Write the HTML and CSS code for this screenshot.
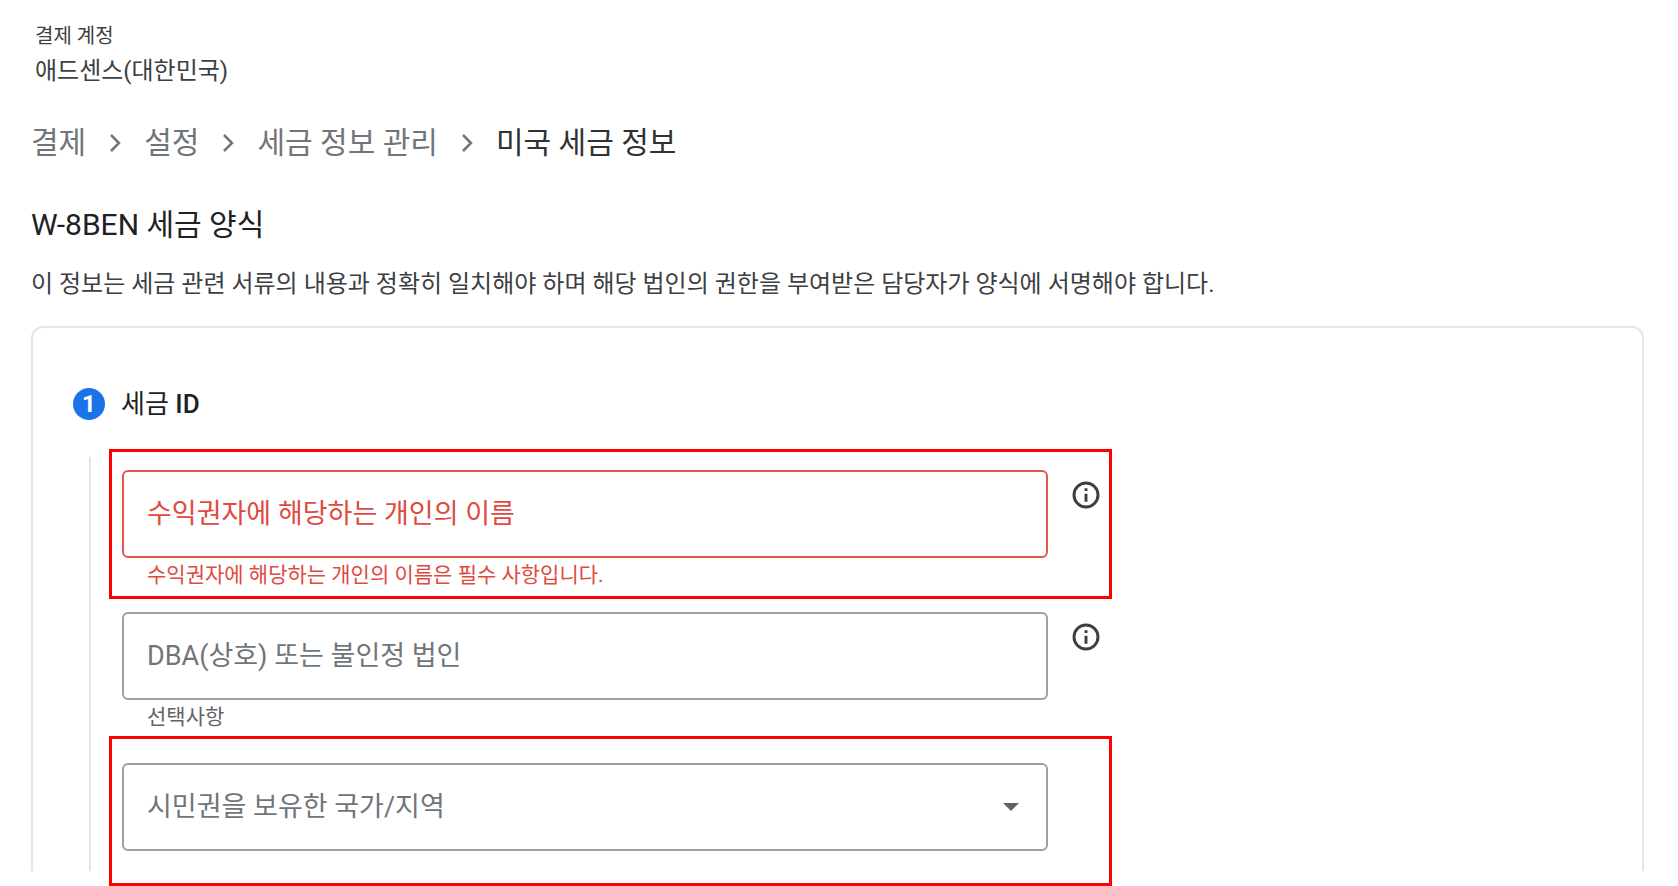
FILE: index.html
```
<!DOCTYPE html>
<html lang="ko">
<head>
<meta charset="UTF-8">
<meta name="viewport" content="width=device-width, initial-scale=1.0">
<title>미국 세금 정보</title>
<link rel="stylesheet" href="styles.css">
</head>
<body>
<header class="account">
  <div class="account-label">결제 계정</div>
  <div class="account-name">애드센스(대한민국)</div>
</header>
<nav class="breadcrumb">
  <a href="#">결제</a>
  <svg class="chevron" viewBox="0 0 24 24"><path d="M8 4l8 8-8 8"/></svg>
  <a href="#">설정</a>
  <svg class="chevron" viewBox="0 0 24 24"><path d="M8 4l8 8-8 8"/></svg>
  <a href="#">세금 정보 관리</a>
  <svg class="chevron" viewBox="0 0 24 24"><path d="M8 4l8 8-8 8"/></svg>
  <span class="current">미국 세금 정보</span>
</nav>
<main>
  <h1>W-8BEN 세금 양식</h1>
  <p class="description">이 정보는 세금 관련 서류의 내용과 정확히 일치해야 하며 해당 법인의 권한을 부여받은 담당자가 양식에 서명해야 합니다.</p>
  <section class="card">
    <div class="step-header">
      <span class="step-number">1</span>
      <h2>세금 <b>ID</b></h2>
    </div>
    <form class="step-body">
      <div class="step-line"></div>
      <div class="fields">
        <div class="row highlight">
          <div class="field error">
            <div class="box">
              <input id="name" type="text" required>
              <label for="name">수익권자에 해당하는 개인의 이름</label>
            </div>
            <div class="helper">수익권자에 해당하는 개인의 이름은 필수 사항입니다.</div>
          </div>
          <button class="info" type="button" aria-label="도움말">
            <svg viewBox="0 0 24 24"><circle cx="12" cy="12" r="9"/><path d="M12 7v2M12 11v6"/></svg>
          </button>
        </div>
        <div class="row">
          <div class="field">
            <div class="box">
              <input id="dba" type="text">
              <label for="dba">DBA(상호) 또는 불인정 법인</label>
            </div>
            <div class="helper">선택사항</div>
          </div>
          <button class="info" type="button" aria-label="도움말">
            <svg viewBox="0 0 24 24"><circle cx="12" cy="12" r="9"/><path d="M12 7v2M12 11v6"/></svg>
          </button>
        </div>
        <div class="row highlight last">
          <div class="field">
            <div class="box">
              <select id="country">
                <option value=""></option>
                <option value="KR">대한민국</option>
                <option value="US">미국</option>
              </select>
              <label for="country">시민권을 보유한 국가/지역</label>
              <svg class="arrow" viewBox="0 0 16 8"><path d="M0 0h16L8 8z"/></svg>
            </div>
          </div>
          <div class="info"></div>
        </div>
      </div>
    </form>
  </section>
</main>
</body>
</html>
```
FILE: styles.css
```
* {
  box-sizing: border-box;
}

body {
  margin: 0;
  padding: 20px 34px 15px 31px;
  background: #fff;
  color: #3c4043;
  font-family: Roboto, 'Noto Sans CJK KR', sans-serif;
}

.account {
  padding-left: 4px;
}

.account-label {
  font-size: 20px;
  line-height: 32px;
}

.account-name {
  font-size: 24px;
  line-height: 38px;
}

.breadcrumb {
  display: flex;
  align-items: center;
  gap: 17px;
  margin-top: 33px;
  font-size: 30px;
  line-height: 40px;
  color: #5f6368;
}

.breadcrumb a {
  color: #70757a;
  text-decoration: none;
}

.breadcrumb .current {
  color: #303134;
}

.chevron {
  width: 24px;
  height: 24px;
  fill: none;
  stroke: #70757a;
  stroke-width: 2.5;
}

h1 {
  margin: 42px 0 0;
  font-size: 30px;
  line-height: 40px;
  font-weight: 400;
  color: #202124;
}

.description {
  margin: 23px 0 26px;
  font-size: 24px;
  line-height: 32px;
}

.card {
  padding: 60px 40px 0;
  border: 2px solid #e4e5ea;
  border-bottom: none;
  border-radius: 12px 12px 0 0;
}

.step-header {
  display: flex;
  align-items: center;
  gap: 16px;
}

.step-number {
  width: 32px;
  height: 32px;
  border-radius: 50%;
  background: #1a73e8;
  color: #fff;
  font-size: 24px;
  font-weight: 700;
  line-height: 32px;
  text-align: center;
}

h2 {
  margin: 0;
  font-size: 26px;
  line-height: 32px;
  font-weight: 400;
  color: #202124;
}

h2 b {
  font-weight: 500;
}

.step-body {
  display: flex;
  margin-top: 29px;
}

.step-line {
  width: 2px;
  margin: 8px 18px 0 16px;
  background: #e4e5ea;
}

.fields {
  flex: 1;
  max-width: 1003px;
}

.row {
  display: flex;
  gap: 22px;
  padding: 13px 10px 2px 13px;
}

.highlight {
  padding: 18px 7px 4px 10px;
  border: 3px solid #f00;
}

.highlight.last {
  padding: 24px 7px 32px 10px;
  margin-bottom: -15px;
}

.field {
  flex: 1;
}

/* input, label and arrow share one grid cell */
.box {
  display: grid;
  align-items: center;
}

.box > * {
  grid-area: 1 / 1;
}

.box input,
.box select {
  width: 100%;
  height: 88px;
  padding: 0 24px;
  border: 2px solid #9aa0a6;
  border-radius: 6px;
  background: #fff;
  color: #202124;
  font: inherit;
  font-size: 27px;
  appearance: none;
  outline: none;
}

.box label {
  margin-left: 25px;
  font-size: 27px;
  line-height: 36px;
  color: #70757a;
  pointer-events: none;
}

.arrow {
  justify-self: end;
  width: 16px;
  height: 8px;
  margin-right: 29px;
  fill: #5f6368;
  pointer-events: none;
}

.helper {
  padding-left: 25px;
  font-size: 21px;
  line-height: 34px;
  color: #5f6368;
}

.box .error,
.error input {
  border-color: #e2574c;
}

.error label,
.error .helper {
  color: #e04a3f;
}

.info {
  width: 32px;
  height: 32px;
  margin-top: 9px;
  padding: 0;
  border: none;
  background: none;
}

.info svg {
  display: block;
  width: 32px;
  height: 32px;
  fill: none;
  stroke: #3c4043;
  stroke-width: 2.2;
}
```
